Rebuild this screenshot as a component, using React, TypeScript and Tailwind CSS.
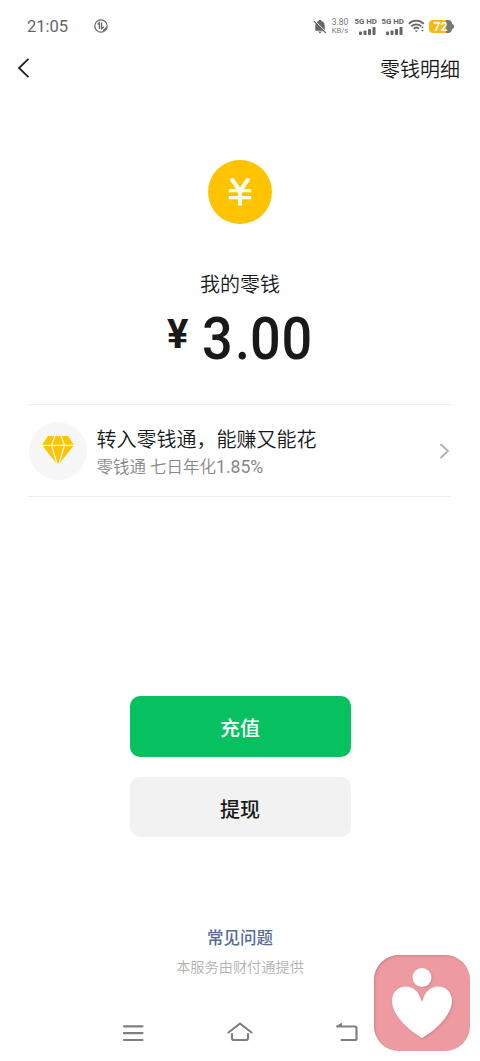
import type { ReactNode } from 'react';

function MutedBell() {
  return (
    <svg className="h-[15px] w-[14px]" viewBox="0 0 14 15">
      <path d="M2.300 11.800V6.600c0-2.600 1.500-4.100 3.500-4.500V1h2.400v1.100c2 .4 3.500 1.900 3.500 4.500v5.200z" fill="#666" />
      <path d="M5 12.500h4L7 14.500z" fill="#666" />
      <path d="M1.300 1.200 13.600 13.500" stroke="#fff" strokeWidth="1" />
      <path d="M.7 1.900 12.800 14" stroke="#666" strokeWidth="1.200" />
    </svg>
  );
}

function CellSignal() {
  return (
    <div className="flex w-[24px] flex-col items-end">
      <span className="whitespace-nowrap text-[7.9px] font-bold leading-[8px] text-[#666]">5G HD</span>
      <svg className="mr-[1px] mt-[1px] h-[8px] w-[17px]" viewBox="0 0 17 8" fill="#666">
        <rect x="0" y="4.500" width="3" height="3.500" rx=".8" />
        <rect x="4.500" y="3.500" width="3" height="4.500" rx=".8" />
        <rect x="9" y="2" width="3" height="6" rx=".8" />
        <rect x="13.500" y="0" width="3" height="8" rx=".8" />
      </svg>
    </div>
  );
}

function WifiIcon() {
  return (
    <svg className="h-[14px] w-[17px]" viewBox="0 0 17 14" fill="none" stroke="#666" strokeWidth="1.900">
      <path d="M.8 4.700C5 .6 11.400.6 15.700 4.700" />
      <path d="M3.300 7.400c2.800-2.700 7.100-2.700 9.900 0" />
      <path d="M5.700 9.800c1.500-1.400 3.700-1.400 5.200 0" />
      <path d="M6.700 11.400h3.200l-1.600 1.900z" fill="#666" stroke="none" />
      <path d="M13 9l1.500-1.600L16 9zM13 11l1.500 1.600L16 11z" fill="#666" stroke="none" />
    </svg>
  );
}

function StatusBar() {
  return (
    <div className="flex h-[52px] items-center pl-[27px] pr-[26px] font-normal">
      <span className="w-[67px] pt-[2px] text-[16.5px] leading-none text-[#666]">21:05</span>
      <svg className="h-[14px] w-[14px]" viewBox="0 0 14 14" fill="none" stroke="#666">
        <circle cx="7" cy="7" r="6.200" strokeWidth="1.200" />
        <path d="M3.600 5.500 5.400 3.700V10M7.600 3.500v6.200L9.800 7.800" strokeWidth="1.300" />
        <path d="M9 11.500c1.700-.4 2.500-1.500 2.900-3" strokeWidth="1.500" />
      </svg>
      <div className="ml-auto flex items-center">
        <MutedBell />
        <div className="ml-[4px] w-[18px] pt-[1px] text-center text-[7.5px] leading-[7.5px] text-[#777]">
          <div className="text-[8.5px]">3.80</div>
          <div>KB/s</div>
        </div>
        <div className="ml-[4px] flex gap-[3px]">
          <CellSignal />
          <CellSignal />
        </div>
        <div className="ml-[4px]">
          <WifiIcon />
        </div>
        <div className="ml-[4px] flex items-center">
          <div className="flex h-[13px] w-[23px] items-center justify-center overflow-hidden rounded-[4px] bg-[linear-gradient(90deg,#fdb913_74%,#777_74%)] pt-[1px] text-[12px] font-bold leading-none text-white">
            72
          </div>
          <div className="h-[5px] w-[2px] rounded-r bg-[#777]" />
        </div>
      </div>
    </div>
  );
}

function CoinIcon() {
  return (
    <div className="flex h-16 w-16 items-center justify-center rounded-full bg-[#ffc300]">
      <svg className="h-[28px] w-[24px]" viewBox="0 0 24 28" fill="none" stroke="#fff" strokeWidth="4">
        <path d="M3.200.3 12 13 20.800.3M12 12v15.500" />
        <path d="M.8 12.700h22.400M.8 19.700h22.400" strokeWidth="3.300" />
      </svg>
    </div>
  );
}

function DiamondIcon() {
  return (
    <svg className="h-[30px] w-[34px]" viewBox="0 0 34 30">
      <path d="M7 0h20l6 9L17 29.500 1 9z" fill="#ffc300" />
      <path d="M0 9.300h34M10.500 9.300 17 31l6.500-21.700M10.500 9.300 14 0M23.500 9.300 20 0" fill="none" stroke="#f7f7f7" strokeWidth="1.300" />
    </svg>
  );
}

function TransferRow() {
  return (
    <div className="ml-[28px] mr-[29px] flex h-[93px] items-center border-y border-[#ededed]">
      <div className="ml-[1px] flex h-[58px] w-[58px] items-center justify-center rounded-full bg-[#f7f7f7]">
        <DiamondIcon />
      </div>
      <div className="ml-[9.500px] flex-1 pt-[6px]">
        <div className="text-[20px] leading-[28px] text-[#191919]">转入零钱通，能赚又能花</div>
        <div className="text-[16.500px] leading-[26px] text-[#888]">
          零钱通 七日年化<span className="text-[17.600px] font-normal">1.85%</span>
        </div>
      </div>
      <svg className="mr-[1px] h-[18px] w-[11px]" viewBox="0 0 11 18" fill="none" stroke="#b2b2b2" strokeWidth="1.800">
        <path d="M1.500 2 9 9l-7.500 7" />
      </svg>
    </div>
  );
}

function ActionButton({ className, children }: { className: string; children: ReactNode }) {
  return (
    <button className={`flex w-[221px] items-center justify-center rounded-[10px] pt-[5px] text-[20px] font-medium ${className}`}>
      {children}
    </button>
  );
}

function SystemNav() {
  return (
    <div className="mt-[44px] flex justify-between pl-[122px] pr-[121px] text-[#808080]">
      <svg className="h-6 w-[22px]" viewBox="0 0 22 24" fill="none" stroke="currentColor" strokeWidth="2.200" strokeLinecap="round">
        <path d="M2 5.300h18.500M2 12.200h18.500M2 19h18.500" />
      </svg>
      <svg className="h-6 w-[28px]" viewBox="0 0 28 24" fill="none" stroke="currentColor" strokeWidth="2.200" strokeLinecap="round" strokeLinejoin="round">
        <path d="M2.500 11.500 14 2.500l11.500 9M6 13v4a2 2 0 0 0 2 2h12a2 2 0 0 0 2-2v-4" />
      </svg>
      <svg className="h-6 w-[24px]" viewBox="0 0 24 24" fill="none" stroke="currentColor" strokeWidth="2.200" strokeLinecap="round">
        <path d="M2.500 5.500H20a1.500 1.500 0 0 1 1.500 1.500V17.500A1.500 1.500 0 0 1 20 19H6.500" />
        <path d="M1.500 5.500 6.500 2.500v3z" fill="currentColor" strokeWidth="1.200" strokeLinejoin="round" />
      </svg>
    </div>
  );
}

function HeartBadge() {
  return (
    <div className="absolute left-[374px] top-[955px] h-24 w-24 rounded-[25px] bg-[#ed9ba1] shadow-[inset_1px_1px_2px_#c98288]">
      <svg className="h-24 w-24 drop-shadow-[1px_1px_1px_#cf8389]" viewBox="0 0 96 96" fill="#fff">
        <circle cx="48" cy="22.500" r="9.500" />
        <path d="M48 47C45 36 39 31.500 32 31.500c-8 0-14 6-14 14C18 60 34 75 48 83c14-8 30-23 30-37.500 0-8-6-14-14-14-7 0-13 4.500-16 15.500z" />
      </svg>
    </div>
  );
}

export default function App() {
  return (
    <div className="relative flex h-[1061px] w-[480px] flex-col overflow-hidden bg-white font-[Roboto,'Noto_Sans_CJK_SC',sans-serif] font-[350]">
      <StatusBar />
      <header className="flex h-[32px] items-center justify-between pl-[17px] pr-[20px]">
        <svg className="h-[20px] w-[13px]" viewBox="0 0 13 20" fill="none" stroke="#222" strokeWidth="1.800">
          <path d="M11.500.8 2 10l9.500 9.200" />
        </svg>
        <span className="pt-[3px] text-[20px] leading-none text-[#191919]">零钱明细</span>
      </header>

      <main className="mt-[76px]">
        <div className="flex flex-col items-center">
          <CoinIcon />
          <div className="mt-[46px] text-[20px] leading-[30px] text-[#191919]">我的零钱</div>
          <div className="mt-[3px] flex h-[70px] w-[146px] items-start font-medium text-[#191919]">
            <span className="mt-[12px] w-[35px] shrink-0 text-[40px] font-bold leading-[40px]">¥</span>
            <span className="origin-left scale-x-[0.9] text-[60px] leading-[72px]">
              <span className="tracking-[2.500px]">3</span>.<span className="tracking-[1px]">00</span>
            </span>
          </div>
        </div>
        <div className="mt-[31px]">
          <TransferRow />
        </div>
        <div className="mt-[199px] flex flex-col items-center gap-[20px]">
          <ActionButton className="h-[61px] bg-[#07c160] text-white">充值</ActionButton>
          <ActionButton className="h-[60px] bg-[#f2f2f2] text-[#191919]">提现</ActionButton>
        </div>
      </main>

      <footer className="mt-[90px] text-center">
        <div className="text-[16.500px] font-medium leading-[24px] text-[#576b95]">常见问题</div>
        <div className="mt-[6px] text-[14.200px] leading-[20px] text-[#b2b2b2]">本服务由财付通提供</div>
        <SystemNav />
      </footer>
      <HeartBadge />
    </div>
  );
}
